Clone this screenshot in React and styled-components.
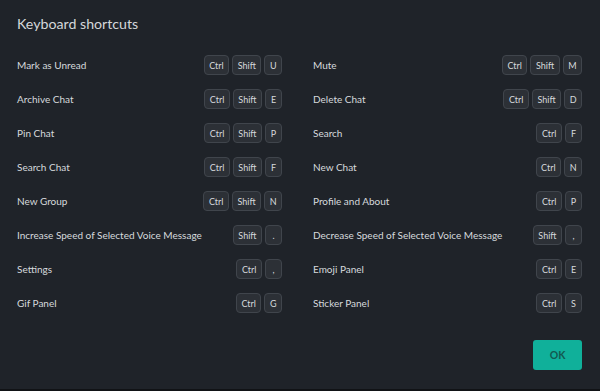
import React from "react";
import styled, { createGlobalStyle } from "styled-components";

const GlobalStyle = createGlobalStyle`
  body {
    margin: 0;
    padding: 0;
    background-color: #111316;
    font-family: Lato, "Noto Sans", sans-serif;
  }
`;

const Dialog = styled.div`
  width: 600px;
  height: 389px;
  box-sizing: border-box;
  background-color: #1f2329;
  padding: 13px 18px 0 17px;
  display: flex;
  flex-direction: column;
`;

const Title = styled.h1`
  margin: 0;
  font-size: 14.2px;
  font-weight: 400;
  line-height: 22px;
  color: #d4d7da;
`;

const ShortcutGrid = styled.div`
  margin-top: 13px;
  display: grid;
  grid-template-columns: 265px 1fr;
  column-gap: 31px;
`;

const Row = styled.div`
  height: 34px;
  display: flex;
  align-items: center;
  justify-content: space-between;
`;

const Label = styled.span`
  font-size: 10px;
  color: #d6dadd;
  white-space: nowrap;
`;

const Keys = styled.div`
  display: flex;
  gap: 3px;
`;

const Key = styled.kbd`
  box-sizing: border-box;
  height: 20px;
  min-width: 17px;
  padding: 0 4.5px;
  display: flex;
  align-items: center;
  justify-content: center;
  font-family: inherit;
  font-size: 9px;
  color: #d6d9dc;
  background-color: #2c3036;
  border: 1px solid #40454c;
  border-radius: 4px;
`;

const Footer = styled.div`
  margin-top: 20px;
  display: flex;
  justify-content: flex-end;
`;

const OkButton = styled.button`
  width: 49px;
  height: 30px;
  border: none;
  border-radius: 3px;
  background-color: #10b09a;
  color: #125a50;
  font-family: inherit;
  font-size: 10.5px;
  font-weight: 700;
  cursor: pointer;
`;

const shortcuts = [
  ["Mark as Unread", ["Ctrl", "Shift", "U"]],
  ["Mute", ["Ctrl", "Shift", "M"]],
  ["Archive Chat", ["Ctrl", "Shift", "E"]],
  ["Delete Chat", ["Ctrl", "Shift", "D"]],
  ["Pin Chat", ["Ctrl", "Shift", "P"]],
  ["Search", ["Ctrl", "F"]],
  ["Search Chat", ["Ctrl", "Shift", "F"]],
  ["New Chat", ["Ctrl", "N"]],
  ["New Group", ["Ctrl", "Shift", "N"]],
  ["Profile and About", ["Ctrl", "P"]],
  ["Increase Speed of Selected Voice Message", ["Shift", "."]],
  ["Decrease Speed of Selected Voice Message", ["Shift", ","]],
  ["Settings", ["Ctrl", ","]],
  ["Emoji Panel", ["Ctrl", "E"]],
  ["Gif Panel", ["Ctrl", "G"]],
  ["Sticker Panel", ["Ctrl", "S"]],
];

export default function App() {
  return (
    <>
      <GlobalStyle />
      <Dialog>
        <Title>Keyboard shortcuts</Title>
        <ShortcutGrid>
          {shortcuts.map(([label, keys]) => (
            <Row key={label}>
              <Label>{label}</Label>
              <Keys>
                {keys.map((k, i) => (
                  <Key key={i}>{k}</Key>
                ))}
              </Keys>
            </Row>
          ))}
        </ShortcutGrid>
        <Footer>
          <OkButton>OK</OkButton>
        </Footer>
      </Dialog>
    </>
  );
}
